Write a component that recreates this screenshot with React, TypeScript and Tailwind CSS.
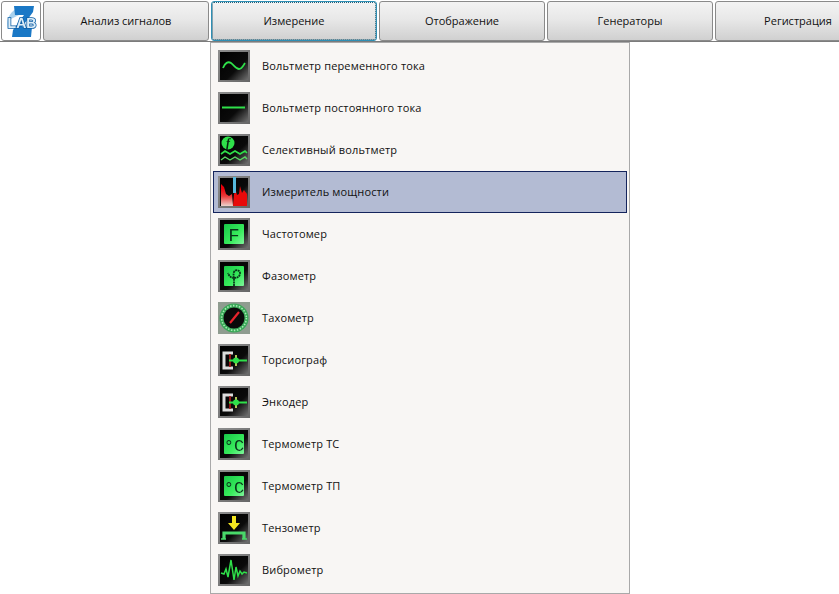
import type { ReactNode } from 'react';

const tabs = ['Анализ сигналов', 'Измерение', 'Отображение', 'Генераторы', 'Регистрация'];

const G = '#2fe04a';

// Shared dark icon tile with a grey frame and a glossy corner
function Tile({ children, id, screen }: { children: ReactNode; id: string; screen?: boolean }) {
  return (
    <svg width="32" height="32" viewBox="0 0 32 32" className="shrink-0 blur-[0.4px]">
      <defs>
        <linearGradient id={`frame-${id}`} x1="0" y1="0" x2="1" y2="1">
          <stop offset="0" stopColor="#8e8e8e" />
          <stop offset="1" stopColor="#666" />
        </linearGradient>
        <linearGradient id={`gloss-${id}`} x1="0" y1="0" x2="1" y2="1">
          <stop offset="0" stopColor="#000" />
          <stop offset="0.6" stopColor="#0a0a0a" />
          <stop offset="1" stopColor="#707070" />
        </linearGradient>
        <linearGradient id={`lcd-${id}`} x1="0" y1="0" x2="1" y2="1">
          <stop offset="0" stopColor="#18c848" />
          <stop offset="0.6" stopColor="#38ec5c" />
          <stop offset="1" stopColor="#80f49c" />
        </linearGradient>
      </defs>
      <rect width="32" height="32" fill={`url(#frame-${id})`} />
      <rect x="2" y="2" width="28" height="28" fill={`url(#gloss-${id})`} />
      {screen && <rect x="6" y="6" width="20" height="20" rx="1" fill={`url(#lcd-${id})`} />}
      {children}
    </svg>
  );
}

function LcdText({ children, size = 19 }: { children: string; size?: number }) {
  return (
    <text
      x="16"
      y="22.5"
      textAnchor="middle"
      fontSize={size}
      fontFamily="'Liberation Mono', monospace"
      fill="#08341a"
    >
      {children}
    </text>
  );
}

const icons: Record<string, ReactNode> = {
  ac: (
    <Tile id="ac">
      <path d="M5 18c2-5 5-7 8-5s5 6 8 6 4-3 6-6" fill="none" stroke={G} strokeWidth="1.8" />
    </Tile>
  ),
  dc: (
    <Tile id="dc">
      <path d="M4 15.5h23" stroke={G} strokeWidth="2" />
    </Tile>
  ),
  sel: (
    <Tile id="sel">
      <circle cx="10" cy="9" r="6.5" fill={G} />
      <text x="10" y="13" textAnchor="middle" fontSize="12" fontWeight="700" fontStyle="italic" fontFamily="'Liberation Serif', serif" fill="#06260e">
        f
      </text>
      <path d="M3 20l4-3 5 3 5-3 5 3 5-3 2 2" fill="none" stroke={G} strokeWidth="1.6" />
      <path d="M3 26l4-3 5 3 5-3 5 3 5-3 2 2" fill="none" stroke="#57d863" strokeWidth="1.4" />
    </Tile>
  ),
  power: (
    <Tile id="power">
      <defs>
        <linearGradient id="power-fade" x1="0" y1="0" x2="0" y2="1">
          <stop offset="0.2" stopColor="#e8000a" />
          <stop offset="0.55" stopColor="#ea3a3a" />
          <stop offset="1" stopColor="#ecd2cc" />
        </linearGradient>
      </defs>
      <path d="M3 8l3 3 2 7 3 2 3-2 1 12H3z" fill="url(#power-fade)" />
      <path d="M15 30l1-12 2-3 1 4 2-1 1-8 2 7 2-3 3 4v12z" fill="#e80a0a" />
      <rect x="15" y="1" width="3" height="16" fill="#56b8dc" />
    </Tile>
  ),
  freq: (
    <Tile id="freq" screen>
      <LcdText>F</LcdText>
    </Tile>
  ),
  phase: (
    <Tile id="phase" screen>
      <path
        d="M16 26v-8c-3 0-5-2-6-5M16 18c4 0 6-2 6-5s-5-4-6-1 0 6 0 6"
        fill="none"
        stroke="#08341a"
        strokeWidth="1.8"
        strokeDasharray="2 0.6"
      />
    </Tile>
  ),
  tacho: (
    <Tile id="tacho">
      <rect width="32" height="32" fill="#8f9c90" />
      <circle cx="16" cy="16" r="14.5" fill="#3aa858" />
      <circle cx="16" cy="16" r="12.4" fill="none" stroke="#a8ecb4" strokeWidth="1.6" strokeDasharray="1.5 1.5" />
      <circle cx="16" cy="16" r="10.5" fill="#0a0a0a" />
      <path d="M12 21L21 10" stroke="#e8242c" strokeWidth="2.2" />
    </Tile>
  ),
  torsio: (
    <Tile id="torsio">
      <path d="M15 9H6v15h9" fill="none" stroke="#dcdcdc" strokeWidth="3" />
      <path d="M12 10v13" stroke="#a01818" strokeWidth="1.8" />
      <path d="M11 16.5h18" stroke={G} strokeWidth="2" />
      <path d="M18 11v11" stroke="#c8d860" strokeWidth="1.8" />
      <circle cx="18" cy="16.5" r="3" fill={G} />
    </Tile>
  ),
  temp: (
    <Tile id="temp" screen>
      <LcdText size={17}>°C</LcdText>
    </Tile>
  ),
  tenzo: (
    <Tile id="tenzo">
      <path d="M14 4h4v7h4l-6 7-6-7h4z" fill="#f4e620" />
      <path d="M6 27v-6h20v6" fill="none" stroke="#49d86a" strokeWidth="3.2" />
      <path d="M3 27h5M24 27h5" stroke="#49d86a" strokeWidth="1.6" />
    </Tile>
  ),
  vibro: (
    <Tile id="vibro">
      <path
        d="M3 19l3 1 2-5 2 8 3-17 3 20 2-13 2 9 2-5 2 3 2-2 3 1"
        fill="none"
        stroke={G}
        strokeWidth="1.5"
      />
    </Tile>
  ),
};

const items = [
  { label: 'Вольтметр переменного тока', icon: 'ac' },
  { label: 'Вольтметр постоянного тока', icon: 'dc' },
  { label: 'Селективный вольтметр', icon: 'sel' },
  { label: 'Измеритель мощности', icon: 'power', active: true },
  { label: 'Частотомер', icon: 'freq' },
  { label: 'Фазометр', icon: 'phase' },
  { label: 'Тахометр', icon: 'tacho' },
  { label: 'Торсиограф', icon: 'torsio' },
  { label: 'Энкодер', icon: 'torsio' },
  { label: 'Термометр ТС', icon: 'temp' },
  { label: 'Термометр ТП', icon: 'temp' },
  { label: 'Тензометр', icon: 'tenzo' },
  { label: 'Виброметр', icon: 'vibro' },
];

function Logo() {
  return (
    <svg width="36" height="36" viewBox="0 0 36 36" className="blur-[0.3px]">
      {/* pale swoosh behind the Z */}
      <path d="M5 26C2 16 8 6 20 3l-4 9-8 4z" fill="#a9d2ee" />
      <path d="M11 3h20l-1 6-11 15h10l-1 10H9l1-7 11-15h-9z" fill="#1a78c6" />
      <text x="19" y="25" textAnchor="middle" fontSize="14" fontWeight="700" fontFamily="'Liberation Sans', sans-serif" fill="#dcedf8" stroke="#0e5fa6" strokeWidth="1.6" paintOrder="stroke">
        LAB
      </text>
    </svg>
  );
}

export default function App() {
  return (
    <div className="h-[594px] w-[839px] overflow-hidden bg-white font-['Open_Sans',sans-serif] text-[11px] text-[#111]">
      {/* Top toolbar */}
      <div className="flex h-[42px] gap-[2px] border-b border-[#7c7c7c] pt-px pl-px">
        <button className="flex h-[40px] w-[40px] shrink-0 items-center justify-center rounded-[3px] border border-[#8a8a8a] bg-white">
          <Logo />
        </button>
        {tabs.map((tab) => {
          const selected = tab === 'Измерение';
          return (
            <button
              key={tab}
              className={`flex h-[40px] w-[166px] shrink-0 items-center justify-center rounded-[3px] border bg-gradient-to-b from-[#f3f3f3] via-[#e8e8e8] via-45% to-[#d0d0d0] ${
                selected ? 'border-[#2f8fb4] outline-1 -outline-offset-2 outline-[#1f5f78] outline-dotted' : 'border-[#8a8a8a]'
              }`}
            >
              {tab}
            </button>
          );
        })}
      </div>

      {/* Dropdown menu */}
      <div className="ml-[210px] h-[552px] w-[420px] border border-[#a9a9a9] bg-[#f8f6f4] px-[2px] pt-[2px]">
        {items.map((item) => (
          <div
            key={item.label}
            className={`flex h-[42px] items-center gap-[12px] border pl-[4px] tracking-[0.15px] ${
              item.active ? 'border-[#14245c] bg-[#b3bbd3]' : 'border-transparent'
            }`}
          >
            {icons[item.icon]}
            <span>{item.label}</span>
          </div>
        ))}
      </div>
    </div>
  );
}
